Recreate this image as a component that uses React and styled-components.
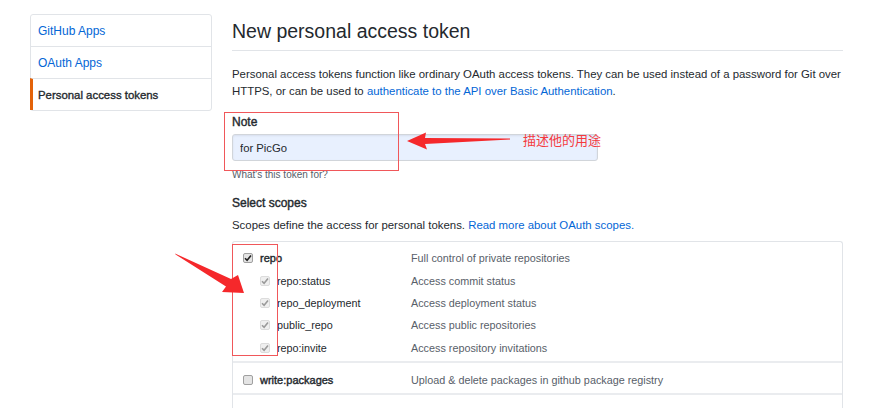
import styled, { createGlobalStyle } from "styled-components";

const GlobalStyle = createGlobalStyle`
  body {
    margin: 0;
    background: #ffffff;
    font-family: "Liberation Sans", Arial, sans-serif;
    color: #24292e;
  }
`;

const scopes = [
  {
    name: "repo",
    desc: "Full control of private repositories",
    children: [
      { name: "repo:status", desc: "Access commit status" },
      { name: "repo_deployment", desc: "Access deployment status" },
      { name: "public_repo", desc: "Access public repositories" },
      { name: "repo:invite", desc: "Access repository invitations" },
    ],
    checked: true,
  },
  {
    name: "write:packages",
    desc: "Upload & delete packages in github package registry",
    children: [],
    checked: false,
  },
];

const CheckIcon = () => (
  <svg width="8" height="8" viewBox="0 0 8 8">
    <path d="M1 4.2 L3.1 6.3 L7 1.6" fill="none" stroke="currentColor" strokeWidth="1.6" />
  </svg>
);

const App = () => {
  return (
    <>
      <GlobalStyle />
      <Page>
        <Sidebar>
          <SideItem>GitHub Apps</SideItem>
          <SideItem>OAuth Apps</SideItem>
          <SideItem $active>Personal access tokens</SideItem>
        </Sidebar>

        <Main>
          <Title>New personal access token</Title>
          <Intro>
            Personal access tokens function like ordinary OAuth access tokens. They can be used
            instead of a password for Git over HTTPS, or can be used to{" "}
            <Link>authenticate to the API over Basic Authentication</Link>.
          </Intro>

          <Label>Note</Label>
          <NoteInput defaultValue="for PicGo" />
          <Hint>What&apos;s this token for?</Hint>

          <Label $top={15}>Select scopes</Label>
          <Intro $top={6}>
            Scopes define the access for personal tokens. <Link>Read more about OAuth scopes.</Link>
          </Intro>

          <ScopeTable>
            {scopes.map((s) => (
              <ScopeGroup key={s.name} $sub={s.children.length > 0}>
                <ScopeRow>
                  <ScopeName $strong>
                    <Box $checked={s.checked}>{s.checked && <CheckIcon />}</Box>
                    {s.name}
                  </ScopeName>
                  <ScopeDesc>{s.desc}</ScopeDesc>
                </ScopeRow>
                {s.children.map((c) => (
                  <ScopeRow key={c.name}>
                    <ScopeName $indent>
                      <Box $checked $disabled>
                        <CheckIcon />
                      </Box>
                      {c.name}
                    </ScopeName>
                    <ScopeDesc>{c.desc}</ScopeDesc>
                  </ScopeRow>
                ))}
              </ScopeGroup>
            ))}
          </ScopeTable>
        </Main>

        {/* annotations drawn over the screenshot */}
        <MarkBox $x={224} $y={112} $w={175} $h={59} />
        <MarkBox $x={232} $y={244} $w={46} $h={112} />
        <Arrows width="873" height="408" viewBox="0 0 873 408">
          <polygon points="407,141 426,132.5 425,138 510,138.6 510,139.6 425,144 427,149.5" fill="#f5282b" />
          <polygon points="175,253.5 175.6,254.4 226,286.5 222,292 244,293 238,275 231,279" fill="#f5282b" />
        </Arrows>
        <MarkNote>描述他的用途</MarkNote>
      </Page>
    </>
  );
};

const Page = styled.div`
  position: relative;
  display: flex;
  align-items: flex-start;
  gap: 20px;
  padding: 14px 0 0 30px;
  height: 408px;
  box-sizing: border-box;
  overflow: hidden;
`;

const Sidebar = styled.nav`
  width: 182px;
  border: 1px solid #e1e4e8;
  border-radius: 3px;
  box-sizing: border-box;
  display: flex;
  flex-direction: column;
`;

const SideItem = styled.div`
  height: 31px;
  display: flex;
  align-items: center;
  padding-left: ${(p) => (p.$active ? "5px" : "7px")};
  margin-left: ${(p) => (p.$active ? "-1px" : "0")};
  border-left: ${(p) => (p.$active ? "3px solid #e36209" : "none")};
  font-size: ${(p) => (p.$active ? "11.4px" : "12px")};
  color: ${(p) => (p.$active ? "#24292e" : "#0366d6")};
  -webkit-text-stroke: ${(p) => (p.$active ? "0.35px currentColor" : "0")};
  & + & {
    border-top: 1px solid #e1e4e8;
  }
`;

const Main = styled.main`
  width: 611px;
  display: flex;
  flex-direction: column;
  align-items: flex-start;
`;

const Title = styled.h2`
  align-self: stretch;
  margin: 5px 0 0;
  padding-bottom: 6px;
  border-bottom: 1px solid #e1e4e8;
  font-size: 19.5px;
  font-weight: 400;
  line-height: 25px;
`;

const Intro = styled.p`
  margin: ${(p) => p.$top ?? 15}px 0 0;
  font-size: 11.4px;
  line-height: 17px;
  color: #24292e;
`;

const Link = styled.a`
  color: #0366d6;
  cursor: pointer;
`;

const Label = styled.div`
  margin-top: ${(p) => p.$top ?? 14}px;
  font-size: 12px;
  line-height: 16px;
  -webkit-text-stroke: 0.4px currentColor;
`;

const NoteInput = styled.input`
  margin-top: 4px;
  width: 366px;
  height: 27px;
  box-sizing: border-box;
  padding: 0 7px;
  background: #e8f0fe;
  border: 1px solid #d1d5da;
  border-radius: 3px;
  box-shadow: inset 0 1px 2px rgba(27, 31, 35, 0.075);
  font-family: inherit;
  font-size: 11.3px;
  color: #24292e;
  outline: none;
`;

const Hint = styled.div`
  margin-top: 8px;
  font-size: 10px;
  color: #586069;
`;

const ScopeTable = styled.div`
  margin-top: 7px;
  align-self: stretch;
  padding-bottom: 30px;
  border: 1px solid #e1e4e8;
  border-bottom: none;
  border-radius: 3px 3px 0 0;
`;

const ScopeGroup = styled.div`
  padding: ${(p) => (p.$sub ? "5px 0 2px" : "6px 0 2px")};
  border-bottom: 2px solid #eaecef;
`;

const ScopeRow = styled.div`
  display: grid;
  grid-template-columns: 168px 1fr;
  align-items: center;
  height: 22.4px;
  padding-left: 10px;
  font-size: 10.8px;
`;

const ScopeName = styled.div`
  display: flex;
  align-items: center;
  padding-left: ${(p) => (p.$indent ? "17px" : "0")};
  font-size: ${(p) => (p.$strong ? "11px" : "inherit")};
  -webkit-text-stroke: ${(p) => (p.$strong ? "0.4px currentColor" : "0")};
  color: #24292e;
`;

const Box = styled.span`
  width: 10px;
  height: 10px;
  margin-right: 7px;
  box-sizing: border-box;
  display: inline-flex;
  align-items: center;
  justify-content: center;
  border: 1px solid ${(p) => (p.$disabled ? "#dcdcdc" : "#a0a0a0")};
  border-radius: 2px;
  background: ${(p) => (p.$disabled ? "#efefef" : "#e4e4e4")};
  color: ${(p) => (p.$disabled ? "#9a9a9a" : "#222")};
  -webkit-text-stroke: 0;
`;

const ScopeDesc = styled.div`
  color: #586069;
`;

const MarkBox = styled.div`
  position: absolute;
  left: ${(p) => p.$x}px;
  top: ${(p) => p.$y}px;
  width: ${(p) => p.$w}px;
  height: ${(p) => p.$h}px;
  box-sizing: border-box;
  border: 1px solid #f0575a;
  pointer-events: none;
`;

const Arrows = styled.svg`
  position: absolute;
  left: 0;
  top: 0;
  pointer-events: none;
`;

const MarkNote = styled.div`
  position: absolute;
  left: 523px;
  top: 131px;
  font-family: "Noto Sans CJK SC", sans-serif;
  font-size: 13px;
  line-height: 18px;
  color: #f53a3d;
`;

export default App;
